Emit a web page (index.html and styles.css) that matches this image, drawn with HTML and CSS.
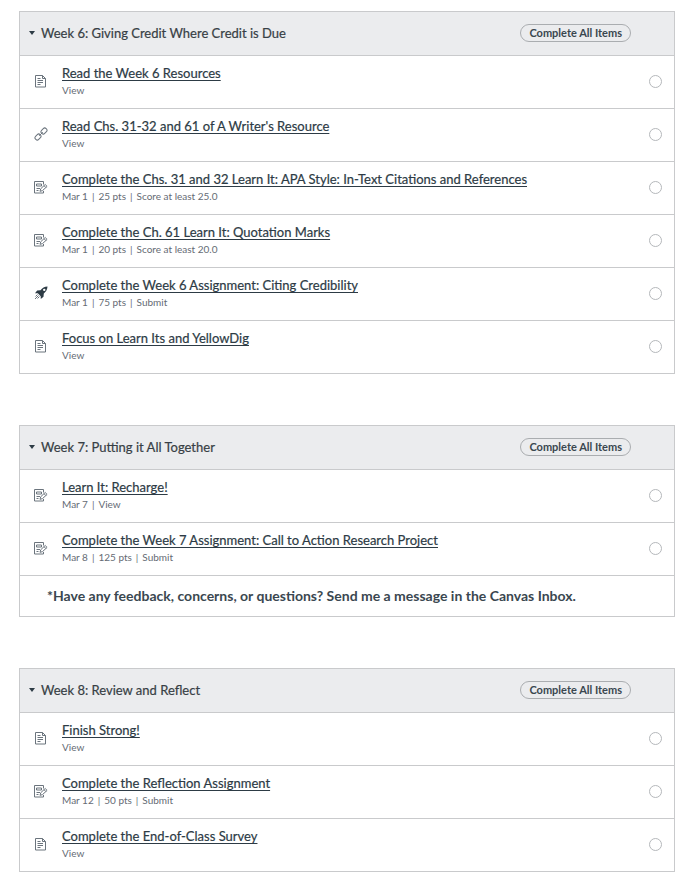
FILE: index.html
```html
<!DOCTYPE html>
<html lang="en">
<head>
<meta charset="utf-8">
<meta name="viewport" content="width=device-width, initial-scale=1">
<title>Modules</title>
<link rel="stylesheet" href="styles.css">
</head>
<body>
<svg class="sprite" aria-hidden="true">
  <symbol id="page" viewBox="0 0 14 14">
    <path d="M1.500 1.500h7l3 3v8.500h-10zM8.500 1.500v3h3M3.500 4.500h3M3.500 6.500h5.500M3.500 8.500h5.500M3.500 10.500h3"/>
  </symbol>
  <symbol id="link" viewBox="0 0 14 14">
    <rect x="-3.2" y="-2.200" width="6.4" height="4.400" rx="2" transform="translate(4 10) rotate(-45)"/>
    <rect x="-3.2" y="-2.200" width="6.4" height="4.400" rx="2" transform="translate(10 4) rotate(-45)"/>
    <path d="M5.2 8.8l3.6-3.6"/>
  </symbol>
  <symbol id="assignment" viewBox="0 0 14 14">
    <path d="M9.500 4.500V1.500h-9v11.500h9v-2M2.500 4h5v2h-5zM2.500 8.500h3.500M2.500 10.500h2"/>
    <path d="M6 11.300l.7-2.500 4.500-4.300 1.900 1.900L8.500 10.600zM10 5.700l1.800 1.800"/>
  </symbol>
  <symbol id="rocket" viewBox="0 0 14 14">
    <path class="solid" fill-rule="evenodd" d="M13.500.5C10.500.6 8.300 2 6.500 4.200L3.200 4.500 1 7.200l2.800.1 2.900 2.900.1 2.800 2.700-2.200.3-3.300C12 5.700 13.400 3.500 13.500.5zM10.300 2.700a1.200 1.200 0 1 1-.1 2.400 1.200 1.200 0 0 1 .1-2.400z"/>
    <path d="M3.500 8.500l-2 2M4.500 9.500l-3.500 3.500M5.500 10.500l-2 2"/>
  </symbol>
</svg>
<main>
  <section class="module">
    <header class="module-header">
      <h2><button class="toggle" type="button" aria-expanded="true"><span class="caret"></span>Week 6: Giving Credit Where Credit is Due</button></h2>
      <span class="pill">Complete All Items</span>
    </header>
    <ul class="items">
      <li class="item"><svg class="icon"><use href="#page"/></svg><div class="info"><a href="#">Read the Week 6 Resources</a><p class="meta"><span>View</span></p></div><span class="status"></span></li>
      <li class="item"><svg class="icon"><use href="#link"/></svg><div class="info"><a href="#">Read Chs. 31-32 and 61 of A Writer's Resource</a><p class="meta"><span>View</span></p></div><span class="status"></span></li>
      <li class="item"><svg class="icon"><use href="#assignment"/></svg><div class="info"><a href="#">Complete the Chs. 31 and 32 Learn It: APA Style: In-Text Citations and References</a><p class="meta"><span>Mar 1</span><span>25 pts</span><span>Score at least 25.0</span></p></div><span class="status"></span></li>
      <li class="item"><svg class="icon"><use href="#assignment"/></svg><div class="info"><a href="#">Complete the Ch. 61 Learn It: Quotation Marks</a><p class="meta"><span>Mar 1</span><span>20 pts</span><span>Score at least 20.0</span></p></div><span class="status"></span></li>
      <li class="item"><svg class="icon"><use href="#rocket"/></svg><div class="info"><a href="#">Complete the Week 6 Assignment: Citing Credibility</a><p class="meta"><span>Mar 1</span><span>75 pts</span><span>Submit</span></p></div><span class="status"></span></li>
      <li class="item"><svg class="icon"><use href="#page"/></svg><div class="info"><a href="#">Focus on Learn Its and YellowDig</a><p class="meta"><span>View</span></p></div><span class="status"></span></li>
    </ul>
  </section>
  <section class="module">
    <header class="module-header">
      <h2><button class="toggle" type="button" aria-expanded="true"><span class="caret"></span>Week 7: Putting it All Together</button></h2>
      <span class="pill">Complete All Items</span>
    </header>
    <ul class="items">
      <li class="item"><svg class="icon"><use href="#assignment"/></svg><div class="info"><a href="#">Learn It: Recharge!</a><p class="meta"><span>Mar 7</span><span>View</span></p></div><span class="status"></span></li>
      <li class="item"><svg class="icon"><use href="#assignment"/></svg><div class="info"><a href="#">Complete the Week 7 Assignment: Call to Action Research Project</a><p class="meta"><span>Mar 8</span><span>125 pts</span><span>Submit</span></p></div><span class="status"></span></li>
      <li class="note">*Have any feedback, concerns, or questions? Send me a message in the Canvas Inbox.</li>
    </ul>
  </section>
  <section class="module">
    <header class="module-header">
      <h2><button class="toggle" type="button" aria-expanded="true"><span class="caret"></span>Week 8: Review and Reflect</button></h2>
      <span class="pill">Complete All Items</span>
    </header>
    <ul class="items">
      <li class="item"><svg class="icon"><use href="#page"/></svg><div class="info"><a href="#">Finish Strong!</a><p class="meta"><span>View</span></p></div><span class="status"></span></li>
      <li class="item"><svg class="icon"><use href="#assignment"/></svg><div class="info"><a href="#">Complete the Reflection Assignment</a><p class="meta"><span>Mar 12</span><span>50 pts</span><span>Submit</span></p></div><span class="status"></span></li>
      <li class="item"><svg class="icon"><use href="#page"/></svg><div class="info"><a href="#">Complete the End-of-Class Survey</a><p class="meta"><span>View</span></p></div><span class="status"></span></li>
    </ul>
  </section>
</main>
</body>
</html>
```
FILE: styles.css
```css
* {
  box-sizing: border-box;
}

body {
  margin: 0;
  background: #fff;
  color: #2d3b45;
  font-family: Lato, "Liberation Sans", sans-serif;
  font-size: 13px;
  line-height: 16px;
}

.sprite {
  display: none;
}

main {
  display: flex;
  flex-direction: column;
  gap: 51px;
  padding: 11px 22px 19px 19px;
}

.module {
  border: 1px solid #c9cacc;
}

.module-header {
  display: flex;
  align-items: center;
  justify-content: space-between;
  min-height: 43px;
  padding: 0 43px 2px 9px;
  background: #ebecee;
}

h2 {
  margin: 0;
  font: inherit;
}

.toggle {
  display: flex;
  align-items: center;
  gap: 6px;
  padding: 0;
  border: 0;
  background: none;
  color: #383f45;
  font: inherit;
  text-align: left;
  -webkit-text-stroke: 0.2px;
}

.caret {
  border: 3px solid transparent;
  border-top: 4px solid #2d3b45;
  border-bottom: 0;
}

.pill {
  padding: 0 8px;
  border: 1px solid #aaadb0;
  border-radius: 9px;
  color: #3a4750;
  font-size: 11px;
  font-weight: 700;
  line-height: 16px;
}

.items {
  margin: 0;
  padding: 0;
  list-style: none;
}

.item,
.note {
  border-top: 1px solid #c9cacc;
}

.item {
  display: flex;
  align-items: center;
  min-height: 53px;
  padding: 0 12px 2px 14px;
}

.icon {
  flex: none;
  width: 14px;
  height: 14px;
  margin-right: 14px;
  fill: none;
  stroke: #6b747d;
}

symbol .solid {
  fill: #2d3b45;
  stroke: none;
}

.info {
  flex: 1;
}

a {
  color: #2d3b45;
  text-decoration: underline;
  text-underline-offset: 2px;
  -webkit-text-stroke: 0.2px;
}

.meta {
  display: flex;
  margin: 2px 0 0;
  color: #656b74;
  font-size: 10px;
  line-height: 14px;
}

.meta span + span::before {
  content: "|";
  margin: 0 4px;
}

.status {
  flex: none;
  width: 13px;
  height: 13px;
  border: 1px solid #b5b8bb;
  border-radius: 50%;
}

.note {
  padding: 12px 27px;
  color: #3a4750;
  font-size: 14px;
  font-weight: 700;
}
```
